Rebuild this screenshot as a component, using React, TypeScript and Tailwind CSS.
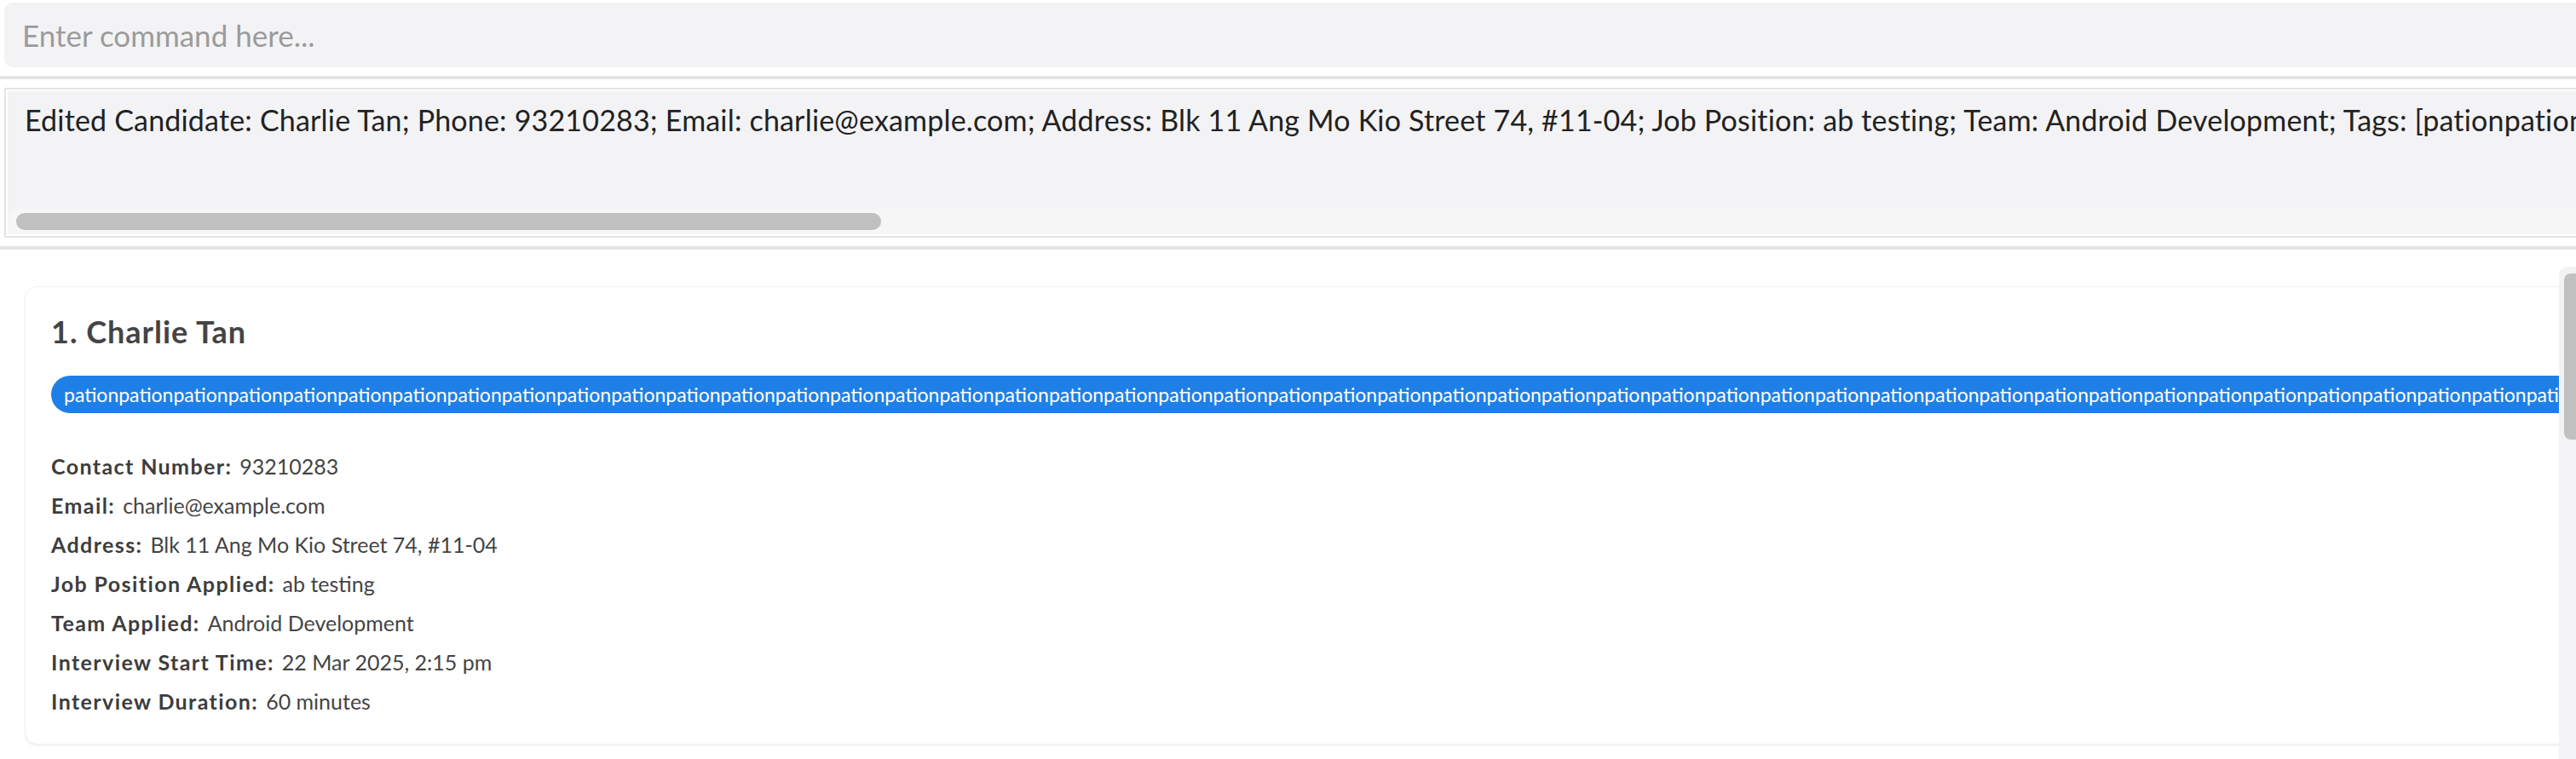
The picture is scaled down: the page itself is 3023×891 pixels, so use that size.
import React from "react";

const tag = "pation".repeat(60);

const details: [string, string][] = [
  ["Contact Number:", "93210283"],
  ["Email:", "charlie@example.com"],
  ["Address:", "Blk 11 Ang Mo Kio Street 74, #11-04"],
  ["Job Position Applied:", "ab testing"],
  ["Team Applied:", "Android Development"],
  ["Interview Start Time:", "22 Mar 2025, 2:15 pm"],
  ["Interview Duration:", "60 minutes"],
];

const result =
  "Edited Candidate: Charlie Tan; Phone: 93210283; Email: charlie@example.com; Address: Blk 11 Ang Mo Kio Street 74, #11-04; Job Position: ab testing; Team: Android Development; Tags: [" +
  tag +
  "]";

const App = () => {
  return (
    <div className="w-[3023px] h-[891px] overflow-hidden bg-white flex flex-col [font-family:Lato,'Noto_Sans',sans-serif]">
      {/* command box */}
      <div className="pt-[3px] pl-[5px] shrink-0">
        <div className="w-[3100px] h-[76px] bg-[#f3f3f5] rounded-[10px] flex items-center pl-[21px] text-[35px] text-[#9b9b9b]">
          Enter command here...
        </div>
      </div>

      <div className="mt-[10px] h-[4px] bg-[#e4e4e4] shrink-0" />

      {/* result display */}
      <div className="mt-[10px] ml-[5px] w-[3100px] h-[176px] border-2 border-[#e3e3e3] p-[2px] shrink-0">
        <div className="h-full bg-[#f3f3f5] flex flex-col">
          <div className="flex-1 pl-[20px] pt-[14px] text-[34px] leading-[40px] tracking-[0.18px] text-[#222] whitespace-nowrap overflow-hidden">
            {result}
          </div>
          <div className="h-[30px] bg-[#f6f6f7] rounded-tl-[14px] flex items-center pl-[10px]">
            <div className="w-[1015px] h-[20px] rounded-full bg-[#c0c0c0]" />
          </div>
        </div>
      </div>

      <div className="mt-[10px] h-[4px] bg-[#e4e4e4] shrink-0" />

      {/* candidate list */}
      <div className="flex-1 flex min-h-0">
        <div className="w-[3003px] overflow-hidden pt-[43px] pl-[29px]">
          <div className="w-[3100px] h-[538px] bg-white border border-[#efefef] rounded-[14px] shadow-[0_2px_3px_rgba(0,0,0,0.05)] pt-[30px] pl-[30px]">
            <h2 className="text-[36px] leading-[44px] font-bold tracking-[1px] text-[#444]">1. Charlie Tan</h2>
            <div className="mt-[30px] h-[44px] rounded-full bg-[#1e80e7] flex items-center pl-[15px] text-[23px] text-white whitespace-nowrap overflow-hidden">
              {tag}
            </div>
            <div className="mt-[39px] flex flex-col">
              {details.map(([label, value]) => (
                <div key={label} className="flex gap-[9px] text-[25px] leading-[46px]">
                  <span className="font-bold tracking-[1.4px] text-[#3d3d3d]">{label}</span>
                  <span className="text-[#444]">{value}</span>
                </div>
              ))}
            </div>
          </div>
        </div>
        <div className="w-[20px] mt-[20px] bg-[#f3f3f5] rounded-tl-[10px] overflow-hidden pt-[8px] pl-[6px]">
          <div className="w-[24px] h-[195px] rounded-[8px] bg-[#c0c0c0]" />
        </div>
      </div>
    </div>
  );
};

export default App;
